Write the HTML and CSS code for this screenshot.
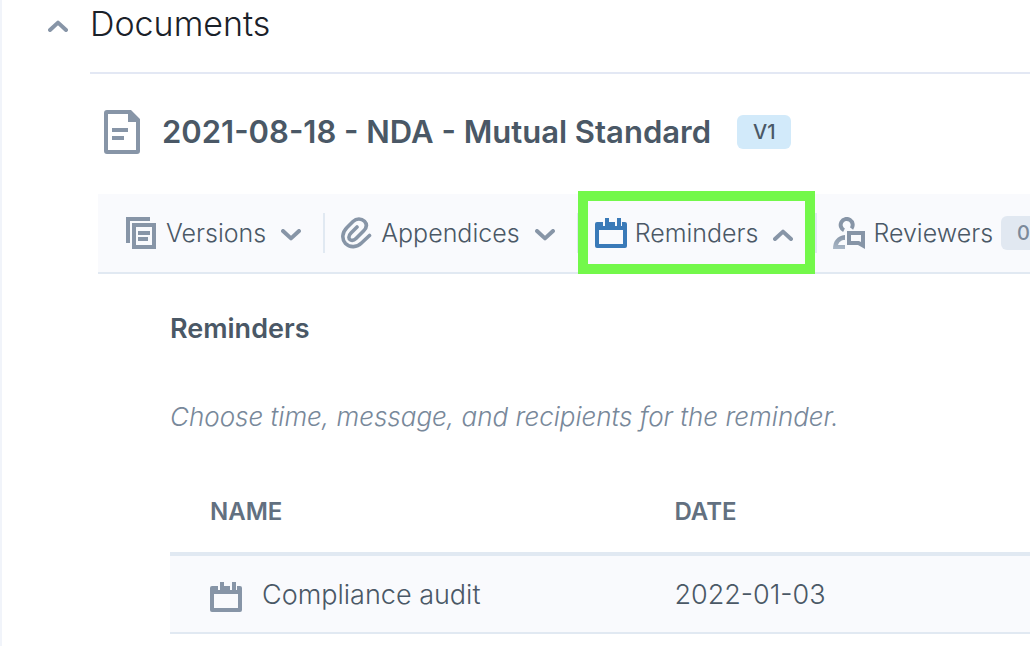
FILE: index.html
```
<!DOCTYPE html>
<html lang="en">
<head>
    <meta charset="UTF-8">
    <meta name="viewport" content="width=device-width, initial-scale=1.0">
    <title>Documents</title>
    <link rel="stylesheet" href="styles.css">
</head>
<body>
    <!-- shared icons -->
    <svg class="sprite" aria-hidden="true">
        <symbol id="chevron" viewBox="0 0 20 12">
            <path d="M2 10 L10 2.6 L18 10" fill="none" stroke="currentColor" stroke-width="4" stroke-linecap="round" stroke-linejoin="round"/>
        </symbol>
        <symbol id="calendar" viewBox="0 0 32 32">
            <path fill="currentColor" fill-rule="evenodd" d="M2 5H8V9H10V1H14V9H20V9H22V1H26V9H27V5H30A2 2 0 0 1 32 7V29A2 2 0 0 1 30 31H2A2 2 0 0 1 0 29V7A2 2 0 0 1 2 5ZM4 13V27H28V13Z"/>
            <path fill="currentColor" d="M14 5H20V9H14Z"/>
        </symbol>
    </svg>

    <main class="page">
        <header class="page-header">
            <button type="button" class="toggle" aria-label="Collapse documents" aria-expanded="true">
                <svg class="chevron"><use href="#chevron"/></svg>
            </button>
            <h1>Documents</h1>
        </header>

        <article class="document">
            <div class="document-title">
                <svg class="doc-icon" viewBox="0 0 36 44">
                    <path fill="currentColor" fill-rule="evenodd" d="M3 0H27L36 9V41A3 3 0 0 1 33 44H3A3 3 0 0 1 0 41V3A3 3 0 0 1 3 0ZM4 4V40H32V12H24V4Z"/>
                    <path fill="currentColor" d="M8 18H24V22H8ZM8 26H20V30H8Z"/>
                </svg>
                <h2>2021-08-18 - NDA - Mutual Standard</h2>
                <span class="version">V1</span>
            </div>

            <nav class="tabs">
                <button type="button" class="tab">
                    <svg class="icon" viewBox="0 0 32 32">
                        <path fill="currentColor" d="M0 0H24V4H4V26H0Z"/>
                        <path fill="currentColor" fill-rule="evenodd" d="M6 6H30V32H6ZM10 10V28H26V10Z"/>
                        <path fill="currentColor" d="M12 14H24V18H12ZM12 20H22V24H12Z"/>
                    </svg>
                    <span>Versions</span>
                    <svg class="chevron down"><use href="#chevron"/></svg>
                </button>
                <button type="button" class="tab">
                    <svg class="icon" viewBox="0 0 32 32">
                        <path fill="none" stroke="currentColor" stroke-width="3.6" stroke-linecap="round" stroke-linejoin="round" d="M16 10L10 16C7 19 7.500 22 9.500 23C11.500 24 13.500 23 15 21.500L22.500 14C26 10.500 26 7 23.500 4.300C20.500 1.300 15.500 1 12 4.500L6 10.500C1 15.500 0.500 22 4.500 26.500C9 31 16 30.500 20.500 26L28.500 18.500"/>
                    </svg>
                    <span>Appendices</span>
                    <svg class="chevron down"><use href="#chevron"/></svg>
                </button>
                <button type="button" class="tab active" aria-expanded="true">
                    <svg class="icon"><use href="#calendar"/></svg>
                    <span>Reminders</span>
                    <svg class="chevron"><use href="#chevron"/></svg>
                </button>
                <button type="button" class="tab">
                    <svg class="icon" viewBox="0 0 32 32">
                        <defs>
                            <linearGradient id="body" x1="0" y1="0" x2="0" y2="1">
                                <stop offset="0" stop-color="#8795a7"/>
                                <stop offset="1" stop-color="#a9b7c7"/>
                            </linearGradient>
                        </defs>
                        <path fill="none" stroke="currentColor" stroke-width="4" d="M11 13.300A6 6 0 1 1 18.500 11.500"/>
                        <path fill="url(#body)" d="M0 32C0 24 4 19 12 18V23C8 23 6 25 5 28H12V32Z"/>
                        <path fill="currentColor" fill-rule="evenodd" d="M14 14H32V32L25 28H14ZM18 18V24H26L28 25V18Z"/>
                    </svg>
                    <span>Reviewers</span>
                    <span class="count">0</span>
                </button>
            </nav>

            <section class="panel">
                <h3>Reminders</h3>
                <p class="hint">Choose time, message, and recipients for the reminder.</p>
                <table>
                    <thead>
                        <tr>
                            <th scope="col" class="name">Name</th>
                            <th scope="col">Date</th>
                        </tr>
                    </thead>
                    <tbody>
                        <tr>
                            <td>
                                <div class="reminder">
                                    <svg class="icon"><use href="#calendar"/></svg>
                                    <span>Compliance audit</span>
                                </div>
                            </td>
                            <td>2022-01-03</td>
                        </tr>
                    </tbody>
                </table>
            </section>
        </article>
    </main>
</body>
</html>
```
FILE: styles.css
```
* {
    box-sizing: border-box;
}
body {
    margin: 0;
    overflow-x: hidden;
    background: #fff;
    color: #4a5866;
    font-family: Inter, "Liberation Sans", sans-serif;
    font-weight: 300;
}
h1, h2, h3, p {
    margin: 0;
}
button {
    padding: 0;
    border: 0;
    background: none;
    color: inherit;
    font: inherit;
    cursor: pointer;
}
svg {
    display: block;
    flex: none;
    color: #8795a7;
}
.sprite {
    position: absolute;
    width: 0;
    height: 0;
}
.chevron {
    width: 20px;
    height: 12px;
}
.down {
    transform: rotate(180deg);
}
.icon {
    width: 32px;
    height: 32px;
}

.page {
    min-height: 100vh;
    border-left: 2px solid #f1f4fa;
}
.page-header {
    display: flex;
    padding-left: 46px;
}
.toggle {
    display: flex;
    align-items: center;
    height: 52px;
    margin-right: 22px;
}
.page-header h1 {
    flex: 1;
    padding-bottom: 24px;
    border-bottom: 2px solid #e3e8f4;
    color: #1a2129;
    font-size: 34px;
    font-weight: 300;
    line-height: 48px;
}

.document {
    padding-left: 96px;
}
.document-title {
    display: flex;
    align-items: center;
    padding: 36px 6px 40px;
}
.doc-icon {
    width: 36px;
    height: 44px;
}
.document-title h2 {
    margin: 0 26px 0 22px;
    font-size: 31px;
    font-weight: 600;
    line-height: 40px;
    white-space: nowrap;
}
.version {
    padding: 0 16px;
    border-radius: 6px;
    background: #d2eafa;
    font-size: 20px;
    font-weight: 500;
    line-height: 34px;
}

.tabs {
    display: flex;
    align-items: center;
    height: 80px;
    padding-left: 12px;
    border-bottom: 2px solid #e1e9f2;
    background: #f9fafd;
}
.tab {
    position: relative;
    display: flex;
    flex: none;
    align-items: center;
    gap: 8px;
    height: 40px;
    padding: 0 22px 0 16px;
    border-left: 2px solid #e1e9f2;
    font-size: 25px;
}
.tab:first-child {
    border-left: 0;
}
.tab .chevron {
    margin: 4px 0 0 7px;
}
.active .icon {
    color: #3a7ab8;
}
/* frame round the open tab */
.active::after {
    content: "";
    position: absolute;
    inset: -22px 0 -21px -1px;
    border: 10px solid #73f84a;
}
.count {
    padding: 0 16px;
    border-radius: 6px;
    background: #e1e8f1;
    color: #7b899a;
    font-size: 20px;
    font-weight: 500;
    line-height: 34px;
}

.panel {
    padding: 37px 0 12px 72px;
}
.panel h3 {
    font-size: 27px;
    font-weight: 600;
    line-height: 36px;
}
.hint {
    margin-top: 52px;
    color: #78889a;
    font-size: 26px;
    font-style: italic;
    line-height: 36px;
}
table {
    width: 100%;
    border-collapse: separate;
    border-spacing: 0;
}
th {
    padding: 62px 40px 25px;
    border-bottom: 4px solid #e1e9f2;
    color: #627080;
    font-size: 24px;
    font-weight: 600;
    line-height: 30px;
    text-align: left;
    text-transform: uppercase;
}
.name {
    width: 54%;
}
td {
    padding: 21px 40px 19px;
    border-bottom: 2px solid #e1e9f2;
    background: #f9fafd;
    font-size: 27px;
    line-height: 36px;
}
.reminder {
    display: flex;
    align-items: center;
    gap: 20px;
}
.reminder .icon {
    margin-top: 4px;
}
```
